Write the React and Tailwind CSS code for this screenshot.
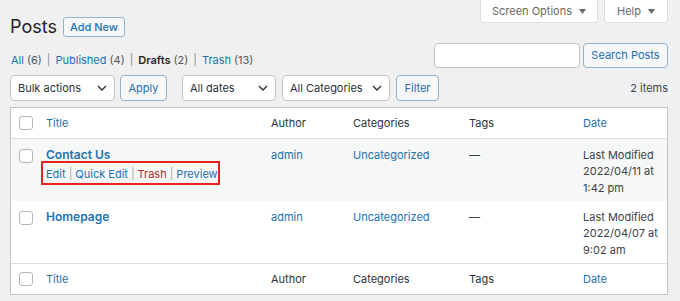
import React from "react";

const Chevron = () => (
  <svg width="10" height="6" viewBox="0 0 10 6" className="shrink-0">
    <path d="M1 1l4 4 4-4" fill="none" stroke="#2c3338" strokeWidth="1.4" />
  </svg>
);

const Tri = () => (
  <svg width="7" height="5" viewBox="0 0 7 5" className="shrink-0">
    <path d="M0 0h7L3.5 5z" fill="#646970" />
  </svg>
);

const Checkbox = () => (
  <div className="w-[14px] h-[14px] rounded-[3px] border border-[#b4b7ba] bg-white" />
);

const Select = ({ label, w }) => (
  <div
    className={`h-[26px] ${w} bg-white border border-[#c3c4c7] rounded-[4px] flex items-center justify-between pl-[7px] pr-[7px] text-[#2c3338]`}
  >
    <span>{label}</span>
    <Chevron />
  </div>
);

const Btn = ({ children, w }) => (
  <div
    className={`h-[26px] ${w} bg-[#f6f7f7] border border-[#93b2d2] rounded-[4px] flex items-center justify-center text-[#2271b1]`}
  >
    {children}
  </div>
);

const cols = "grid grid-cols-[25px_225px_82px_116px_114px_94px]";

const HeaderRow = ({ top }) => (
  <div className={`${cols} h-[31px] items-center ${top ? "border-b" : "border-t"} border-[#dcdcde]`}>
    <div className="pl-[8px]"><Checkbox /></div>
    <div className="pl-[10px] text-[#2271b1]">Title</div>
    <div className="pl-[10px] text-[#2c3338]">Author</div>
    <div className="pl-[10px] text-[#2c3338]">Categories</div>
    <div className="pl-[10px] text-[#2c3338]">Tags</div>
    <div className="pl-[10px] text-[#2271b1]">Date</div>
  </div>
);

const Sep = () => <span className="text-[#a7aaad] px-[3px]">|</span>;

const Row = ({ title, date, time, bg, actions }) => (
  <div className={`${cols} h-[62px] items-start pt-[8px] ${bg} leading-[16.3px]`}>
    <div className="pl-[8px] pt-[2px]"><Checkbox /></div>
    <div className="pl-[10px]">
      <div className="text-[#2271b1] font-semibold text-[12px]">{title}</div>
      {actions && (
        <div className="relative mt-[3px] flex items-center text-[#2271b1]">
          <span className="absolute left-[-5px] top-[-5px] w-[179px] h-[24px] border-2 border-[#e8231d]" />
          <span>Edit</span>
          <Sep />
          <span>Quick Edit</span>
          <Sep />
          <span className="text-[#b32d2e]">Trash</span>
          <Sep />
          <span>Preview</span>
        </div>
      )}
    </div>
    <div className="pl-[10px] text-[#2271b1]">admin</div>
    <div className="pl-[10px] text-[#2271b1]">Uncategorized</div>
    <div className="pl-[10px] text-[#3c434a]">—</div>
    <div className="pl-[10px] text-[#3c434a]">
      <div>Last Modified</div>
      <div>{date} at</div>
      <div>{time}</div>
    </div>
  </div>
);

export default function App() {
  return (
    <div className="w-[680px] h-[301px] bg-[#f0f0f1] overflow-hidden font-['Inter',sans-serif] text-[11px] text-[#3c434a]">
      <div className="pl-[10px] pr-[12px]">
        {/* top row */}
        <div className="flex justify-between items-start">
          <div className="flex items-center pt-[17px] h-[37px]">
            <h1 className="text-[18px] leading-[20px] text-[#1d2327] font-normal">Posts</h1>
            <div className="ml-[6px] h-[20px] w-[62px] bg-[#f6f7f7] border border-[#93b2d2] rounded-[3px] flex items-center justify-center text-[#2271b1] font-medium">
              Add New
            </div>
          </div>
          <div className="flex gap-[6px]">
            <div className="w-[118px] h-[23px] bg-white border border-t-0 border-[#dcdcde] rounded-b-[4px] flex items-center justify-center gap-[7px] text-[#646970]">
              <span>Screen Options</span>
              <Tri />
            </div>
            <div className="w-[64px] h-[23px] bg-white border border-t-0 border-[#dcdcde] rounded-b-[4px] flex items-center justify-center gap-[7px] text-[#646970]">
              <span>Help</span>
              <Tri />
            </div>
          </div>
        </div>

        {/* status + search */}
        <div className="flex justify-between items-end mt-[6px]">
          <div className="flex items-center h-[20px] mb-[-2px] pl-[1px]">
            <span className="text-[#2271b1]">All</span>
            <span className="text-[#50575e] ml-[3px]">(6)</span>
            <span className="text-[#8c8f94] px-[5px]">|</span>
            <span className="text-[#2271b1]">Published</span>
            <span className="text-[#50575e] ml-[3px]">(4)</span>
            <span className="text-[#8c8f94] px-[5px]">|</span>
            <span className="text-[#1d2327] font-semibold">Drafts</span>
            <span className="text-[#50575e] ml-[3px]">(2)</span>
            <span className="text-[#8c8f94] px-[5px]">|</span>
            <span className="text-[#2271b1]">Trash</span>
            <span className="text-[#50575e] ml-[3px]">(13)</span>
          </div>
          <div className="flex gap-[3px]">
            <div className="w-[146px] h-[25px] bg-white border border-[#c3c4c7] rounded-[4px]" />
            <div className="w-[85px] h-[25px] bg-[#f6f7f7] border border-[#93b2d2] rounded-[4px] flex items-center justify-center text-[#2271b1]">
              Search Posts
            </div>
          </div>
        </div>

        {/* tablenav */}
        <div className="flex items-center mt-[7px] h-[26px]">
          <Select label="Bulk actions" w="w-[105px]" />
          <div className="ml-[5px]"><Btn w="w-[47px]">Apply</Btn></div>
          <div className="ml-[15px]"><Select label="All dates" w="w-[94px]" /></div>
          <div className="ml-[6px]"><Select label="All Categories" w="w-[108px]" /></div>
          <div className="ml-[6px]"><Btn w="w-[43px]">Filter</Btn></div>
          <div className="ml-auto text-[#3c434a]">2 items</div>
        </div>

        {/* table */}
        <div className="mt-[6px] w-[658px] bg-white border border-[#c3c4c7]">
          <HeaderRow top />
          <Row title="Contact Us" date="2022/04/11" time="1:42 pm" bg="bg-[#f6f7f7]" actions />
          <Row title="Homepage" date="2022/04/07" time="9:02 am" bg="bg-white" />
          <HeaderRow />
        </div>
      </div>
    </div>
  );
}
